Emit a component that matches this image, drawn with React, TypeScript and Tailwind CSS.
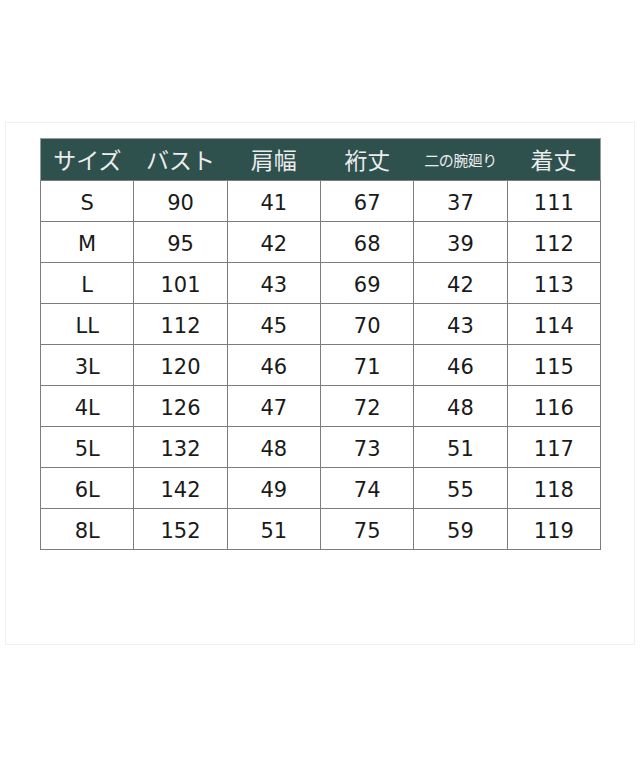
const headers = ['サイズ', 'バスト', '肩幅', '裄丈', '二の腕廻り', '着丈'];

const rows = [
  ['S', '90', '41', '67', '37', '111'],
  ['M', '95', '42', '68', '39', '112'],
  ['L', '101', '43', '69', '42', '113'],
  ['LL', '112', '45', '70', '43', '114'],
  ['3L', '120', '46', '71', '46', '115'],
  ['4L', '126', '47', '72', '48', '116'],
  ['5L', '132', '48', '73', '51', '117'],
  ['6L', '142', '49', '74', '55', '118'],
  ['8L', '152', '51', '75', '59', '119'],
];

export default function App() {
  return (
    <div className="w-[640px] h-[768px] bg-white pt-[122px] pl-[5px]">
      <div className="w-[630px] h-[523px] border border-[#f0f0f0] pt-[15px] pl-[34px]">
        <table className="w-[561px] table-fixed border-collapse border border-[#9a9a9a] [font-family:'DejaVu_Sans','Noto_Sans_CJK_JP',sans-serif]">
          <thead>
            <tr className="h-[42px] bg-[#2e514e]">
              {headers.map((h, i) => (
                <th
                  key={h}
                  className={
                    'font-normal text-[#ececec] [font-family:"Noto_Sans_CJK_JP",sans-serif] leading-none ' +
                    (i === 4 ? 'text-[15px] tracking-[-0.5px]' : 'text-[23px]')
                  }
                >
                  {h}
                </th>
              ))}
            </tr>
          </thead>
          <tbody>
            {rows.map((r) => (
              <tr key={r[0]} className="h-[41px]">
                {r.map((c, i) => (
                  <td
                    key={i}
                    className="border border-[#7c7c7c] text-center text-[21px] text-[#1a1a1a] leading-none pt-[4px]"
                  >
                    {c}
                  </td>
                ))}
              </tr>
            ))}
          </tbody>
        </table>
      </div>
    </div>
  );
}
